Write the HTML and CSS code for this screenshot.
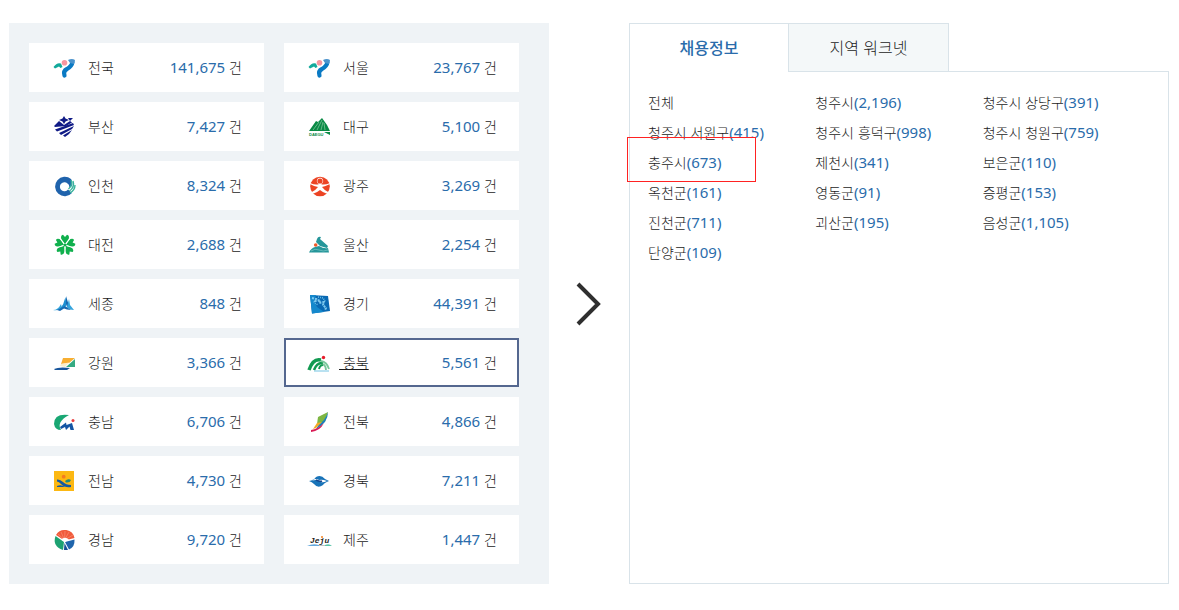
FILE: index.html
```html
<!DOCTYPE html>
<html lang="ko">
<head>
  <meta charset="UTF-8">
  <meta name="viewport" content="width=device-width, initial-scale=1">
  <title>지역별 채용정보</title>
  <link rel="stylesheet" href="styles.css">
</head>
<body>
  <main class="page">

    <!-- Region list -->
    <nav class="regions">
      <a class="region" href="#all">
        <svg class="icon" viewBox="0 0 26 25"><path d="M1.500 12Q5 7 9 8.500L10.500 12L8.500 13L7 11.500L3 13.500Z" fill="#12a99b"/><circle cx="12.500" cy="7.700" r="2.800" fill="#f796a0"/><path d="M12.500 20.500Q11 16 15 14Q20 11 20.500 7" fill="none" stroke="#0a7ac4" stroke-width="4.200" stroke-linecap="round"/><path d="M16 5Q20 3 23 5L22 9L18 8Z" fill="#4b93cc"/></svg>
        <span class="name">전국</span><span class="count"><b>141,675</b> 건</span>
      </a>
      <a class="region" href="#seoul">
        <svg class="icon" viewBox="0 0 26 25"><path d="M1.500 12Q5 7 9 8.500L10.500 12L8.500 13L7 11.500L3 13.500Z" fill="#12a99b"/><circle cx="12.500" cy="7.700" r="2.800" fill="#f796a0"/><path d="M12.500 20.500Q11 16 15 14Q20 11 20.500 7" fill="none" stroke="#0a7ac4" stroke-width="4.200" stroke-linecap="round"/><path d="M16 5Q20 3 23 5L22 9L18 8Z" fill="#4b93cc"/></svg>
        <span class="name">서울</span><span class="count"><b>23,767</b> 건</span>
      </a>
      <a class="region" href="#busan">
        <svg class="icon" viewBox="0 0 26 25"><g fill="#101b86"><path d="M12 2L13.500 4.500L17 6L13.500 7.500L12 10L10.500 7.500L7 6L10.500 4.500Z"/><path d="M16 4L21 4L18 7Z"/><path d="M2 12L7 7L9.500 9L12 11L15 9L18 7L20 8.500L14 12L3 13Z"/><path d="M3 15.500L21 9L22 11L5 17.500Z"/><path d="M7 19L22 12L20 15L9 21Z"/><path d="M11 21.500L20 16L17 20L13 23Z"/></g></svg>
        <span class="name">부산</span><span class="count"><b>7,427</b> 건</span>
      </a>
      <a class="region" href="#daegu">
        <svg class="icon" viewBox="0 0 26 25"><path d="M2 17L9 7L11 8L15 4L20 11L23 17Z" fill="#098a45"/><path d="M6 16L12 8M10 16L15 6M14 16L16 8M18 16L17 9" stroke="#a4d6b7" stroke-width=".6"/><text class="daegu-text" x="2" y="22">DAEGU</text><path d="M17 18L23 18L23 21Z" fill="#098a45"/></svg>
        <span class="name">대구</span><span class="count"><b>5,100</b> 건</span>
      </a>
      <a class="region" href="#incheon">
        <svg class="icon" viewBox="0 0 26 25"><path d="M19 6A9.700 9.700 0 1 0 20 20L16 16.500A4.500 4.500 0 1 1 15.500 10.500Q18 12 17 15L20 13Q21 9 19 6Z" fill="#1f63ac"/><path d="M19 7Q21 12 16.500 16M21 8Q23 14 17.500 18M23 12Q23 17 18 20" fill="none" stroke="#38b49b" stroke-width="1.400"/></svg>
        <span class="name">인천</span><span class="count"><b>8,324</b> 건</span>
      </a>
      <a class="region" href="#gwangju">
        <svg class="icon" viewBox="0 0 26 25"><circle cx="13" cy="13.500" r="9.800" fill="#ec4424"/><path d="M3 10Q9 12.500 12 11A3.200 3.200 0 1 1 14 11Q17 12.500 23 10L23 11Q18 13.500 15 14Q17 17 22 19.500L20.500 21Q15 19 13 17Q11 19 5.500 21L4 19.500Q9 17 11 14Q7 13.500 3 11Z" fill="#fff"/><circle cx="13" cy="8" r="2.600" fill="#ec4424"/></svg>
        <span class="name">광주</span><span class="count"><b>3,269</b> 건</span>
      </a>
      <a class="region" href="#daejeon">
        <svg class="icon" viewBox="0 0 26 25"><defs><path id="petal" d="M13 12L9.500 8Q8 3.500 11 2.800L13 5L15 2.800Q18 3.500 16.500 8Z"/><path id="gap" d="M13 13L13 5"/></defs><g fill="#10b04d"><use href="#petal"/><use href="#petal" transform="rotate(72 13 13)"/><use href="#petal" transform="rotate(144 13 13)"/><use href="#petal" transform="rotate(216 13 13)"/><use href="#petal" transform="rotate(288 13 13)"/></g><g stroke="#fff" stroke-width="1.200"><use href="#gap" transform="rotate(36 13 13)"/><use href="#gap" transform="rotate(108 13 13)"/><use href="#gap" transform="rotate(180 13 13)"/><use href="#gap" transform="rotate(252 13 13)"/><use href="#gap" transform="rotate(324 13 13)"/></g><circle cx="13" cy="13" r="1.500" fill="#10b04d"/></svg>
        <span class="name">대전</span><span class="count"><b>2,688</b> 건</span>
      </a>
      <a class="region" href="#ulsan">
        <svg class="icon" viewBox="0 0 26 25"><g fill="#25969a"><path d="M10 7Q11 4 14 5L13 7L21 14L20 16L13 14L9 10Z"/><path d="M8 15L12 14Q17 17 21 16L22 20.500L2 20.500Q4 16 8 15Z"/></g><path d="M4 19Q8 16 12 18T21 18" fill="none" stroke="#8fd0cf" stroke-width=".6"/><circle cx="8.700" cy="13" r="1.800" fill="#f05a28"/></svg>
        <span class="name">울산</span><span class="count"><b>2,254</b> 건</span>
      </a>
      <a class="region" href="#sejong">
        <svg class="icon" viewBox="0 0 26 25"><path d="M1 19Q6 19 9 13L10 17Q7 20 1 19Z" fill="#35a5dd"/><path d="M8 18Q12 13 13.500 6L14.500 14Q12 18 8 18Z" fill="#1d8ed0"/><path d="M14 5L16.500 13L15.500 17L14 13Z" fill="#1769b3"/><path d="M17 8L18 14L22 19Q17 19 15 16Z" fill="#35a5dd"/><path d="M5 19L13 15L19 19L15 18.500L12 17.500L8 20Z" fill="#1769b3"/></svg>
        <span class="name">세종</span><span class="count"><b>848</b> 건</span>
      </a>
      <a class="region" href="#gyeonggi">
        <svg class="icon" viewBox="0 0 26 25"><path d="M3 4L21 5L23 20L5 22.500Z" fill="#0969b3"/><path d="M3 4L9 4L7 10L10 16L17 21L5 22.500Z" fill="#1488cc"/><path d="M5 7L9 8L8 10L13 9L12 12L17 11L16 14L19 17L18 19" fill="none" stroke="#7cc8ee" stroke-width="2" stroke-dasharray="2 1"/><path d="M11 6L16 7L18 10M8 12L11 14" fill="none" stroke="#67bfe8" stroke-width="1.500" stroke-dasharray="1 1"/></svg>
        <span class="name">경기</span><span class="count"><b>44,391</b> 건</span>
      </a>
      <a class="region" href="#gangwon">
        <svg class="icon" viewBox="0 0 26 25"><path d="M11 8H23L17 13L9 14Z" fill="#f7ae32"/><path d="M23 9V17H14Z" fill="#35aa82"/><path d="M9 14L17 12.500L13 17L8 16Z" fill="#f9eecb"/><path d="M2 19Q7 16.500 18 18L15 20H3Z" fill="#17559b"/></svg>
        <span class="name">강원</span><span class="count"><b>3,366</b> 건</span>
      </a>
      <a class="region selected" href="#chungbuk">
        <svg class="icon" viewBox="0 0 26 25"><g fill="none" stroke="#129a51"><path d="M2 20Q6 8 14 10" stroke-width="3.500"/><path d="M7 20Q10 12 16 13" stroke-width="2.500"/><path d="M12 19Q13 15 16 15" stroke-width="2"/></g><path d="M14 11Q20 12 22 19M16 14Q19 16 19 20" fill="none" stroke="#79c79a" stroke-width="1.800"/><path d="M7 21H22" stroke="#75c4e3" stroke-width="1"/><circle cx="16.500" cy="7.500" r="1.700" fill="#e71d2b"/></svg>
        <span class="name">&nbsp;충북</span><span class="count"><b>5,561</b> 건</span>
      </a>
      <a class="region" href="#chungnam">
        <svg class="icon" viewBox="0 0 26 25"><path d="M17 6Q2 4 2 15Q3 21 9 21Q4 13 17 6Z" fill="#19a773"/><path d="M8 18L14 13.500L14.500 16L20 14L22 21L18.500 21L17.500 17.500L14 21L13 18L9 20Z" fill="#1456a4"/><circle cx="21" cy="11.500" r="1.500" fill="#e83c3c"/></svg>
        <span class="name">충남</span><span class="count"><b>6,706</b> 건</span>
      </a>
      <a class="region" href="#jeonbuk">
        <svg class="icon" viewBox="0 0 26 25"><path d="M11 8L21 3L18 13L10 15Z" fill="#7db642"/><path d="M21 3Q21 14 9 20L12 15Q18 12 21 3Z" fill="#1c80bd"/><path d="M10 14L15 13L9 19L6 20Z" fill="#f4aa24"/><path d="M4 21Q11 20 17 14Q13 22 4 23Z" fill="#d91b55"/></svg>
        <span class="name">전북</span><span class="count"><b>4,866</b> 건</span>
      </a>
      <a class="region" href="#jeonnam">
        <svg class="icon" viewBox="0 0 26 25"><path d="M2 3H22V23H2Z" fill="#fcb813"/><circle cx="11.700" cy="8.700" r="1.900" fill="#f47b20"/><path d="M5 11.500Q8 11 11 14T19 17V19Q13 20 9 16Q7 13.500 5 13.500Z" fill="#135aa2"/><path d="M5 18Q9 16 13 19L5 19Z" fill="#135aa2"/><path d="M13 13Q16 10 19 12Q18 15 14 14.500Z" fill="#218978"/></svg>
        <span class="name">전남</span><span class="count"><b>4,730</b> 건</span>
      </a>
      <a class="region" href="#gyeongbuk">
        <svg class="icon" viewBox="0 0 26 25"><path d="M2 13Q7 12 9 9Q14 6 18 11L22 13Q17 15 16 17Q11 21 7 16Q5 14 2 13Z" fill="#1873b8"/><path d="M5 12.500Q11 11 14 14Q16 15 20 13Q15 11 12 12Q9 10 5 12.500Z" fill="#fff"/><path d="M9 12Q13 14 15 13" fill="none" stroke="#15458e" stroke-width="1.500"/></svg>
        <span class="name">경북</span><span class="count"><b>7,211</b> 건</span>
      </a>
      <a class="region" href="#gyeongnam">
        <svg class="icon" viewBox="0 0 26 25"><path d="M12.500 13.500L4 8A10 10 0 0 1 22.500 11Z" fill="#f05b3c"/><path d="M12 15L3.500 9Q0 19 11 23Z" fill="#1da272"/><path d="M13 15L22.500 12.500Q23 20 17 22.500Z" fill="#1f65ac"/><path d="M12.500 16L16 23H12Z" fill="#174f95"/><path d="M12.500 13L6 7M12.500 13L9 5M12.500 13L13 4M12.500 13L17 5M12.500 13L21 8" stroke="#ffb49d" stroke-width=".4"/><path d="M9 12.500Q13 9 17 12.500L13 15Z" fill="#fff"/></svg>
        <span class="name">경남</span><span class="count"><b>9,720</b> 건</span>
      </a>
      <a class="region" href="#jeju">
        <svg class="icon" viewBox="0 0 26 25"><text class="jeju-text" x="3" y="16">Jeju</text><circle cx="15" cy="10" r="1" fill="#f58220"/><path d="M0 19Q6 16 12 18V19Z" fill="#64a8dc"/><path d="M12 18.500H19" stroke="#999" stroke-width=".6"/><path d="M18 19V18Q22 16 25 19Z" fill="#5bc4aa"/></svg>
        <span class="name">제주</span><span class="count"><b>1,447</b> 건</span>
      </a>
    </nav>

    <div class="arrow">
      <svg width="26" height="44" viewBox="0 0 26 44"><path d="M2 2L22 22L2 42" fill="none" stroke="#2f2f2f" stroke-width="4"/></svg>
    </div>

    <!-- Districts of the selected region -->
    <section class="detail">
      <div class="tabs" role="tablist">
        <button class="tab active" type="button" role="tab" aria-selected="true">채용정보</button>
        <button class="tab" type="button" role="tab" aria-selected="false">지역 워크넷</button>
      </div>
      <ul class="districts">
        <li><a href="#">전체</a></li>
        <li><a href="#">청주시<b>(2,196)</b></a></li>
        <li><a href="#">청주시 상당구<b>(391)</b></a></li>
        <li><a href="#">청주시 서원구<b>(415)</b></a></li>
        <li><a href="#">청주시 흥덕구<b>(998)</b></a></li>
        <li><a href="#">청주시 청원구<b>(759)</b></a></li>
        <li class="marked"><a href="#">충주시<b>(673)</b></a></li>
        <li><a href="#">제천시<b>(341)</b></a></li>
        <li><a href="#">보은군<b>(110)</b></a></li>
        <li><a href="#">옥천군<b>(161)</b></a></li>
        <li><a href="#">영동군<b>(91)</b></a></li>
        <li><a href="#">증평군<b>(153)</b></a></li>
        <li><a href="#">진천군<b>(711)</b></a></li>
        <li><a href="#">괴산군<b>(195)</b></a></li>
        <li><a href="#">음성군<b>(1,105)</b></a></li>
        <li><a href="#">단양군<b>(109)</b></a></li>
      </ul>
    </section>
  </main>
</body>
</html>
```
FILE: styles.css
```css
*, *::after { box-sizing: border-box; }

body {
  margin: 0;
  background: #fff;
  color: #1c1c1c;
  font-family: "Noto Sans CJK KR", sans-serif;
  font-size: 14px;
  font-weight: 300;
}

a {
  color: inherit;
  text-decoration: none;
}

/* Numbers */
b {
  color: #2a6cab;
  font-family: "Noto Sans", sans-serif;
  font-size: 15px;
  font-weight: 400;
}

.page {
  display: grid;
  grid-template-columns: minmax(0, 1fr) 80px minmax(0, 1fr);
  padding: 23px 10px 25px 9px;
}

/* Region cards */
.regions {
  display: grid;
  grid-template-columns: 1fr 1fr;
  gap: 10px 20px;
  padding: 20px 30px 20px 20px;
  background: #eff3f6;
}

.region {
  display: flex;
  align-items: center;
  height: 49px;
  padding: 0 22px 0 23px;
  background: #fff;
  line-height: 23px;
}

.region.selected {
  padding: 0 20px 0 21px;
  border: 2px solid #54678f;
}

.region.selected .name {
  margin-left: 6px;
  text-decoration: underline;
}

.icon {
  width: 26px;
  height: 25px;
}

.name { margin-left: 10px; }
.count { margin-left: auto; }

.daegu-text {
  font: bold 4px "Liberation Sans", sans-serif;
  fill: #098a45;
}

.jeju-text {
  font: italic bold 8px "Liberation Mono", monospace;
  fill: #222;
}

.arrow {
  display: flex;
  align-items: center;
  justify-content: center;
}

.arrow svg { display: block; }

/* Tabs and district list */
.detail {
  display: flex;
  flex-direction: column;
}

.tabs {
  display: flex;
  margin-bottom: -1px;
  position: relative;
}

.tab {
  width: 161px;
  height: 49px;
  padding: 0 0 2px;
  border: 1px solid #d9e3e9;
  background: #f4f8f9;
  color: #1c1c1c;
  font-family: inherit;
  font-size: 16px;
  font-weight: 300;
  cursor: pointer;
}

.tab.active {
  width: 159px;
  border-width: 1px 0 0 1px;
  background: #fff;
  color: #2a6cab;
  font-weight: 500;
}

.districts {
  flex: 1;
  display: grid;
  grid-template-columns: repeat(3, 1fr);
  align-content: start;
  margin: 0;
  padding: 15px 18px;
  border: 1px solid #d9e3e9;
  list-style: none;
  line-height: 30px;
}

.districts li {
  height: 30px;
  white-space: nowrap;
}

.marked { position: relative; }

.marked::after {
  content: "";
  position: absolute;
  left: -21px;
  top: -10px;
  width: 129px;
  height: 45px;
  border: 1px solid #f22;
  pointer-events: none;
}
```
